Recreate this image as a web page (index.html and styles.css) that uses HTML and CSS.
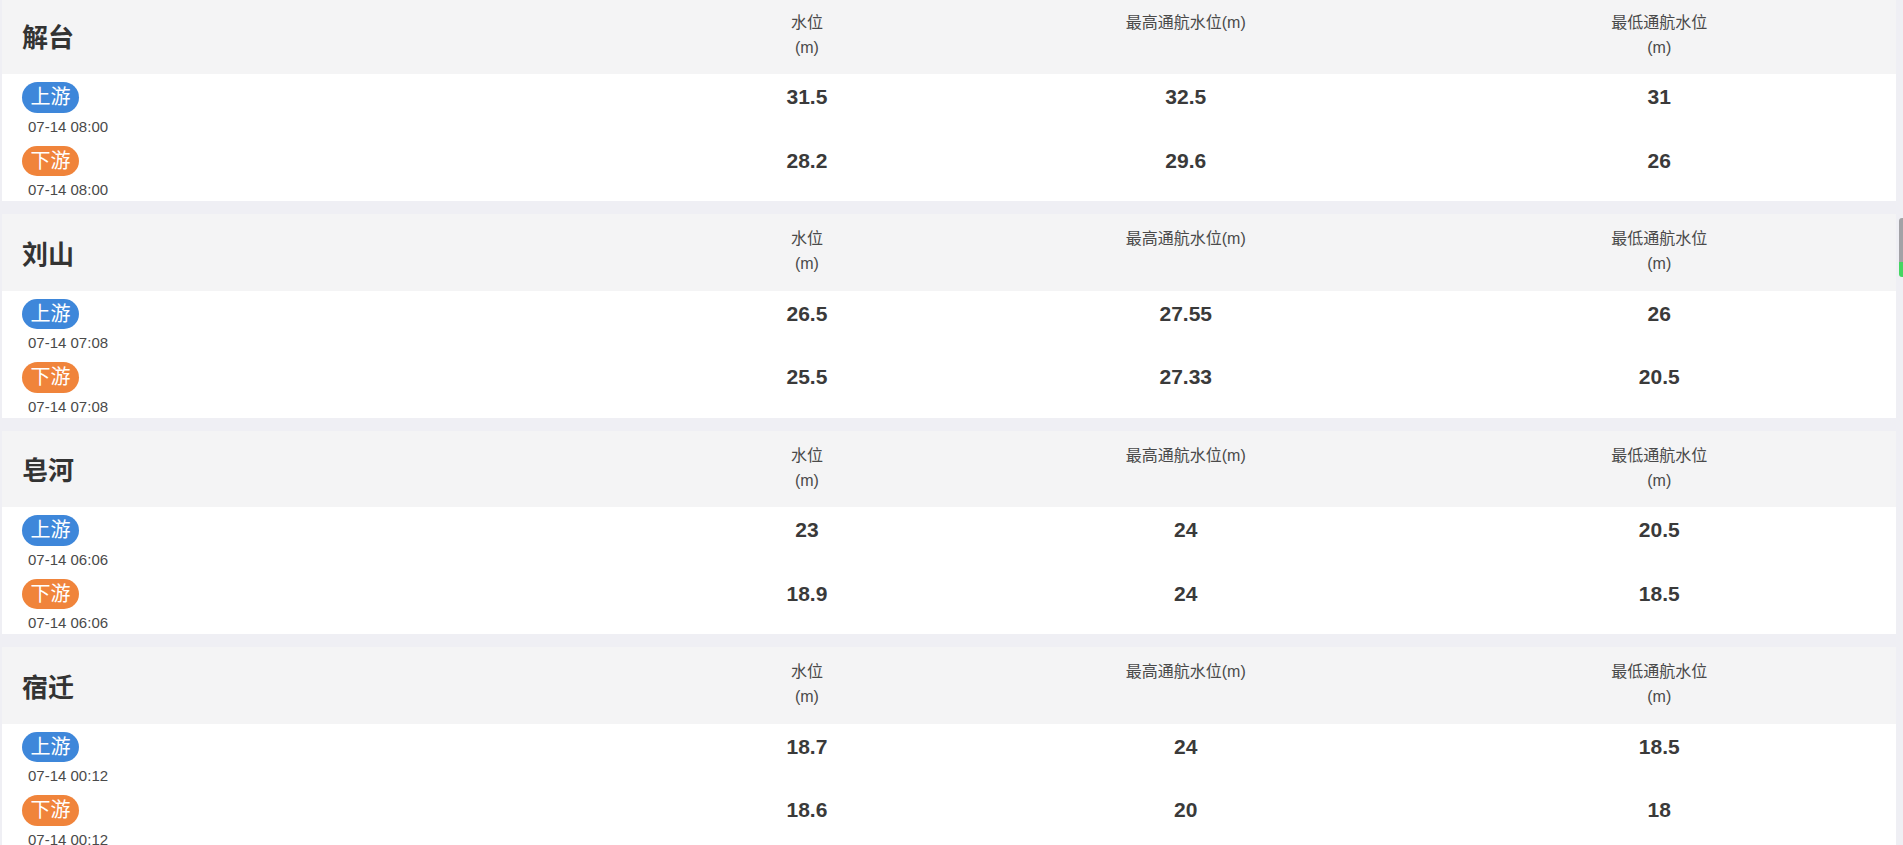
FILE: index.html
```html
<!DOCTYPE html>
<html lang="zh-CN">
<head>
<meta charset="utf-8">
<title>水位</title>
<link rel="stylesheet" href="styles.css">
</head>
<body>
<div class="list">
  <section class="card">
    <div class="card-head">
      <div class="name">解台</div>
      <div class="label">水位<br>(m)</div>
      <div class="label">最高通航水位(m)</div>
      <div class="label">最低通航水位<br>(m)</div>
    </div>
    <div class="card-body">
      <div class="row">
        <div class="pos"><span class="tag up">上游</span><div class="time">07-14 08:00</div></div>
        <div class="val">31.5</div><div class="val">32.5</div><div class="val">31</div>
      </div>
      <div class="row">
        <div class="pos"><span class="tag down">下游</span><div class="time">07-14 08:00</div></div>
        <div class="val">28.2</div><div class="val">29.6</div><div class="val">26</div>
      </div>
    </div>
  </section>
  <section class="card">
    <div class="card-head">
      <div class="name">刘山</div>
      <div class="label">水位<br>(m)</div>
      <div class="label">最高通航水位(m)</div>
      <div class="label">最低通航水位<br>(m)</div>
    </div>
    <div class="card-body">
      <div class="row">
        <div class="pos"><span class="tag up">上游</span><div class="time">07-14 07:08</div></div>
        <div class="val">26.5</div><div class="val">27.55</div><div class="val">26</div>
      </div>
      <div class="row">
        <div class="pos"><span class="tag down">下游</span><div class="time">07-14 07:08</div></div>
        <div class="val">25.5</div><div class="val">27.33</div><div class="val">20.5</div>
      </div>
    </div>
  </section>
  <section class="card">
    <div class="card-head">
      <div class="name">皂河</div>
      <div class="label">水位<br>(m)</div>
      <div class="label">最高通航水位(m)</div>
      <div class="label">最低通航水位<br>(m)</div>
    </div>
    <div class="card-body">
      <div class="row">
        <div class="pos"><span class="tag up">上游</span><div class="time">07-14 06:06</div></div>
        <div class="val">23</div><div class="val">24</div><div class="val">20.5</div>
      </div>
      <div class="row">
        <div class="pos"><span class="tag down">下游</span><div class="time">07-14 06:06</div></div>
        <div class="val">18.9</div><div class="val">24</div><div class="val">18.5</div>
      </div>
    </div>
  </section>
  <section class="card">
    <div class="card-head">
      <div class="name">宿迁</div>
      <div class="label">水位<br>(m)</div>
      <div class="label">最高通航水位(m)</div>
      <div class="label">最低通航水位<br>(m)</div>
    </div>
    <div class="card-body">
      <div class="row">
        <div class="pos"><span class="tag up">上游</span><div class="time">07-14 00:12</div></div>
        <div class="val">18.7</div><div class="val">24</div><div class="val">18.5</div>
      </div>
      <div class="row">
        <div class="pos"><span class="tag down">下游</span><div class="time">07-14 00:12</div></div>
        <div class="val">18.6</div><div class="val">20</div><div class="val">18</div>
      </div>
    </div>
  </section>
</div>
<div class="scroll-thumb"></div>
</body>
</html>
```

FILE: styles.css
```css
html, body {
  margin: 0;
  padding: 0;
  height: 100%;
  overflow: hidden;
}
body {
  background: #efeff4;
  font-family: "Liberation Sans", "Noto Sans CJK SC", sans-serif;
  color: #333;
}
.list {
  margin-top: -2.5px;
  padding: 0 7px 0 2px;
  display: flex;
  flex-direction: column;
  gap: 13px;
}
.card {
  background: #fff;
}
.card-head,
.row {
  display: grid;
  grid-template-columns: 35% 15% 25% 25%;
}
.card-head {
  background: #f4f4f5;
  height: 76.5px;
  box-sizing: border-box;
  align-items: start;
}
.name {
  align-self: center;
  padding-left: 20px;
  font-size: 26px;
  font-weight: bold;
  color: #333;
}
.label {
  padding-top: 12px;
  text-align: center;
  font-size: 16px;
  line-height: 25px;
  color: #4a4a4a;
}
.card-body {
  padding-top: 8px;
  display: flex;
  flex-direction: column;
  gap: 8px;
}
.row {
  align-items: start;
}
.pos {
  padding-left: 20px;
}
.tag {
  display: inline-block;
  height: 30.5px;
  line-height: 30.5px;
  padding: 0 8.5px;
  border-radius: 16px;
  font-size: 20px;
  color: #fff;
}
.tag.up {
  background: #3e87da;
}
.tag.down {
  background: #f0843b;
}
.time {
  margin-top: 3px;
  padding-left: 6px;
  font-size: 15px;
  line-height: 22px;
  color: #4a4a4a;
}
.val {
  text-align: center;
  font-size: 21px;
  font-weight: bold;
  line-height: 30.5px;
  color: #3a3a3a;
}
.scroll-thumb {
  position: fixed;
  top: 218px;
  right: 0;
  width: 4.5px;
  height: 59px;
  border-radius: 3px 0 0 3px;
  background: linear-gradient(#a2a2a6 0, #a2a2a6 74%, #45d662 74%, #45d662 100%);
}
```
